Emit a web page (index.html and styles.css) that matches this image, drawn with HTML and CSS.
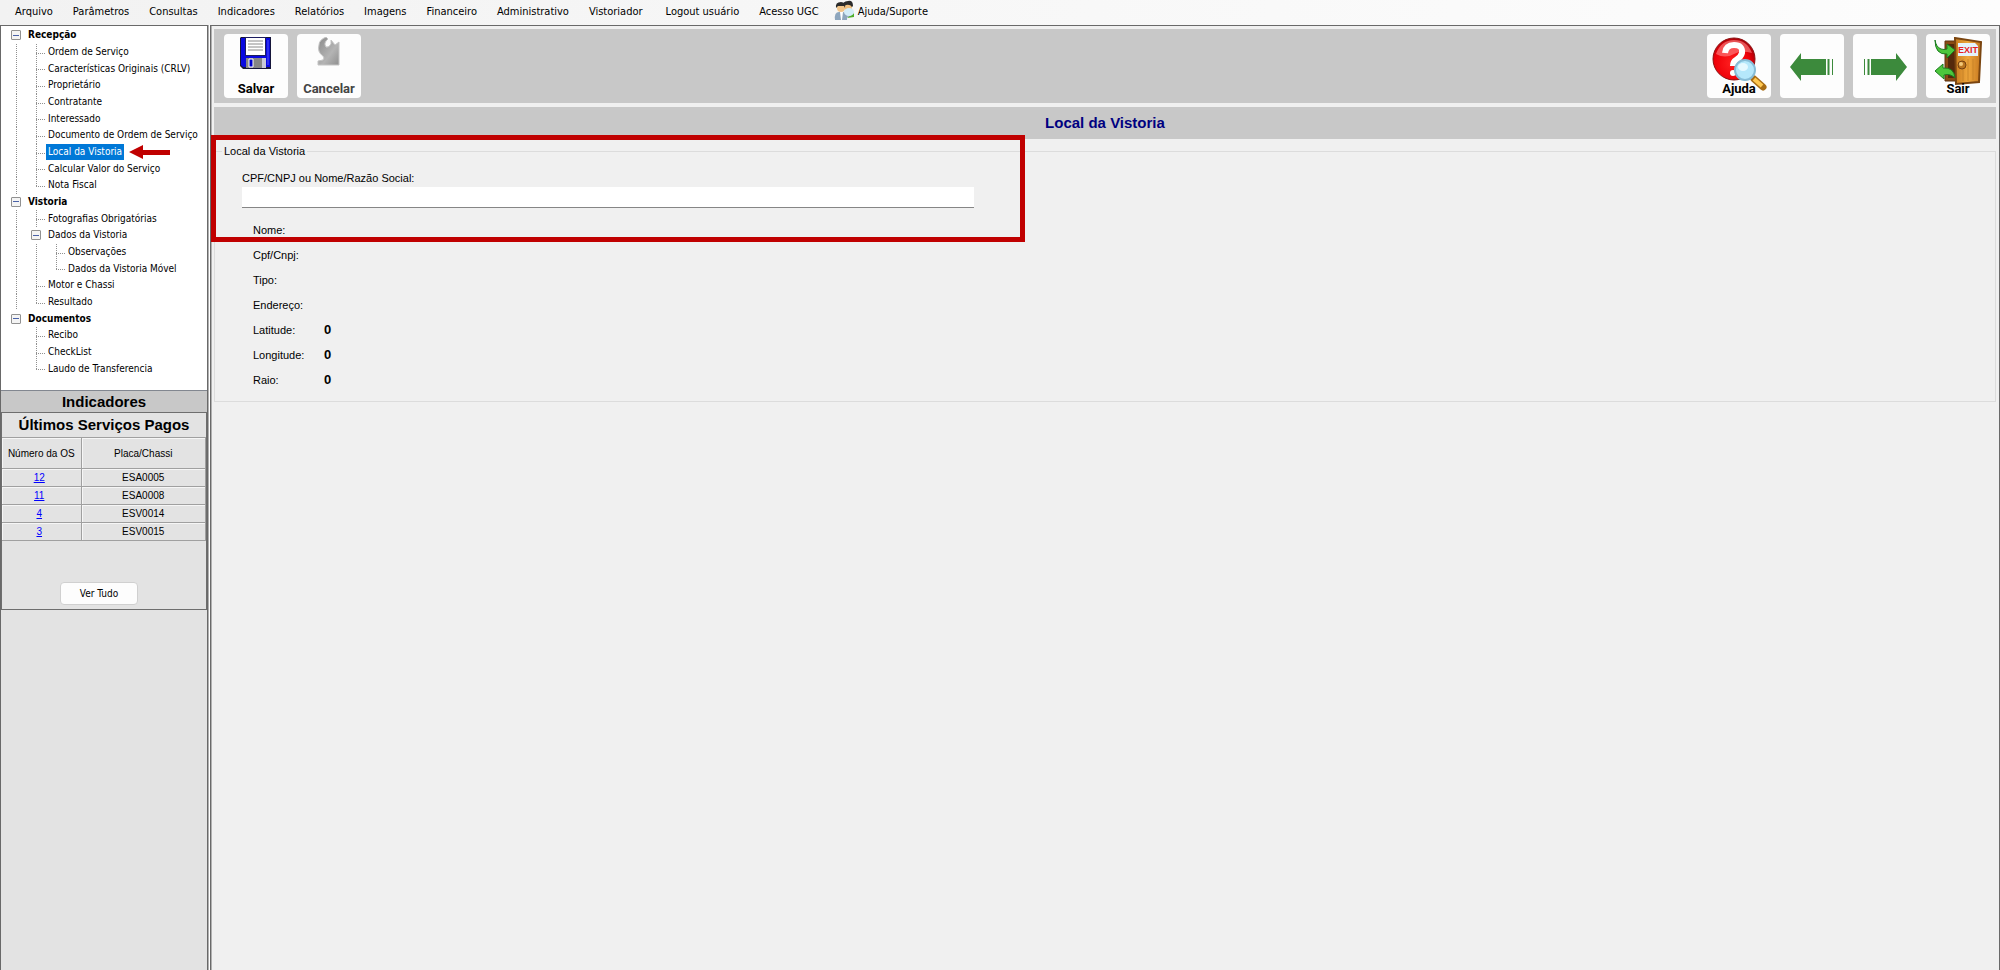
FILE: index.html
```
<!DOCTYPE html>
<html lang="pt-BR">

<head>
    <meta charset="UTF-8">
    <meta name="viewport" content="width=device-width, initial-scale=1.0">
    <title>Local da Vistoria</title>
    <link rel="stylesheet" href="styles.css">
</head>

<body>

    <nav class="menu">
        <a href="#">Arquivo</a>
        <a href="#">Parâmetros</a>
        <a href="#">Consultas</a>
        <a href="#">Indicadores</a>
        <a href="#">Relatórios</a>
        <a href="#">Imagens</a>
        <a href="#">Financeiro</a>
        <a href="#">Administrativo</a>
        <a href="#">Vistoriador</a>
        <a href="#" class="menu-logout">Logout usuário</a>
        <a href="#">Acesso UGC</a>
        <a href="#" class="menu-help">
            <svg width="22" height="22" viewBox="0 0 22 22" aria-hidden="true">
                <path d="M10 12 Q14 9 19 12 L20 17 H9z" fill="#9fb2c6" />
                <circle cx="14" cy="7" r="4" fill="#f0c080" />
                <path d="M9 7 Q8 1 14 1 Q19 0 19 6 L18 7 Q16 4 12 5z" fill="#2b2b2b" />
                <path d="M1 20 Q0 12 5 12 L9 12 Q14 12 13 20z" fill="#8ea6bd" />
                <path d="M6 12 h3 l-1 8 h-1z" fill="#fff" />
                <circle cx="7" cy="8" r="4" fill="#f2c58a" />
                <path d="M2 8 Q1 2 7 2 Q12 2 11 8 L10 6 Q6 6 4 6z" fill="#2b2b2b" />
                <path d="M13 18 L20 13 L20 17z" fill="#4fae2c" />
                <ellipse cx="15" cy="12" rx="5" ry="4" fill="#d3ecf8" />
            </svg>
            Ajuda/Suporte
        </a>
    </nav>

    <div class="window">
        <aside class="sidebar">
            <ul class="tree">
                <li><button class="toggle" aria-label="Recolher Recepção"></button><a href="#" class="root">Recepção</a></li>
                <li><i class="line"></i><i class="branch"></i><a href="#">Ordem de Serviço</a></li>
                <li><i class="line"></i><i class="branch"></i><a href="#">Características Originais (CRLV)</a></li>
                <li><i class="line"></i><i class="branch"></i><a href="#">Proprietário</a></li>
                <li><i class="line"></i><i class="branch"></i><a href="#">Contratante</a></li>
                <li><i class="line"></i><i class="branch"></i><a href="#">Interessado</a></li>
                <li><i class="line"></i><i class="branch"></i><a href="#">Documento de Ordem de Serviço</a></li>
                <li>
                    <i class="line"></i><i class="branch"></i><a href="#" class="selected">Local da Vistoria</a>
                    <svg class="pointer" width="42" height="14" viewBox="0 0 42 14" aria-hidden="true">
                        <path d="M0 7 L14 0 V5 H41 V10 H14 V14z" fill="#c00000" />
                    </svg>
                </li>
                <li><i class="line"></i><i class="branch"></i><a href="#">Calcular Valor do Serviço</a></li>
                <li><i class="line"></i><i class="branch last"></i><a href="#">Nota Fiscal</a></li>
                <li><button class="toggle" aria-label="Recolher Vistoria"></button><a href="#" class="root">Vistoria</a></li>
                <li><i class="line"></i><i class="branch"></i><a href="#">Fotografias Obrigatórias</a></li>
                <li><i class="line"></i><button class="toggle" aria-label="Recolher Dados da Vistoria"></button><a href="#">Dados da Vistoria</a></li>
                <li><i class="line"></i><i class="line"></i><i class="branch"></i><a href="#">Observações</a></li>
                <li><i class="line"></i><i class="line"></i><i class="branch last"></i><a href="#">Dados da Vistoria Móvel</a></li>
                <li><i class="line"></i><i class="branch"></i><a href="#">Motor e Chassi</a></li>
                <li><i class="line"></i><i class="branch last"></i><a href="#">Resultado</a></li>
                <li><button class="toggle" aria-label="Recolher Documentos"></button><a href="#" class="root">Documentos</a></li>
                <li><i class="space"></i><i class="branch"></i><a href="#">Recibo</a></li>
                <li><i class="space"></i><i class="branch"></i><a href="#">CheckList</a></li>
                <li><i class="space"></i><i class="branch last"></i><a href="#">Laudo de Transferencia</a></li>
            </ul>

            <h2 class="sidebar-title">Indicadores</h2>
            <section class="indicators">
                <h3>Últimos Serviços Pagos</h3>
                <table>
                    <thead>
                        <tr>
                            <th>Número da OS</th>
                            <th>Placa/Chassi</th>
                        </tr>
                    </thead>
                    <tbody>
                        <tr>
                            <td><a href="#">12</a></td>
                            <td>ESA0005</td>
                        </tr>
                        <tr>
                            <td><a href="#">11</a></td>
                            <td>ESA0008</td>
                        </tr>
                        <tr>
                            <td><a href="#">4</a></td>
                            <td>ESV0014</td>
                        </tr>
                        <tr>
                            <td><a href="#">3</a></td>
                            <td>ESV0015</td>
                        </tr>
                    </tbody>
                </table>
                <button class="see-all">Ver Tudo</button>
            </section>
        </aside>

        <main>
            <div class="toolbar">
                <button class="tool">
                    <svg width="32" height="32" viewBox="0 0 32 32" aria-hidden="true">
                        <path d="M1 0 H31 V32 H3 L0 29 V1z" fill="#15153a" />
                        <path d="M1 1 H30 V30 H3 L1 28z" fill="#0808e0" />
                        <path d="M5 0 H26 V19 H5z" fill="#1c1c60" />
                        <path d="M6 1 H25 V18 H6z" fill="#fff" />
                        <path d="M8 4 H23 M8 7 H23 M8 10 H23 M8 13 H23" stroke="#8a8a8a" />
                        <path d="M6 21 H25 V31 H6z" fill="#858585" />
                        <path d="M9 22 H13 V30 H9z" fill="#0000d0" stroke="#fff" />
                        <path d="M22 21 H26 V31 H22z" fill="#c8c8d8" />
                        <path d="M28 3 V28" stroke="#5050ff" />
                    </svg>
                    <span>Salvar</span>
                </button>
                <button class="tool" disabled>
                    <svg width="32" height="32" viewBox="0 0 32 32" aria-hidden="true">
                        <defs>
                            <linearGradient id="undo" x1="0" y1="0" x2="1" y2="1">
                                <stop offset="0" stop-color="#8a8a8a" />
                                <stop offset="0.6" stop-color="#b4b4b4" />
                                <stop offset="1" stop-color="#8f8f8f" />
                            </linearGradient>
                        </defs>
                        <path d="M13 0 L15 2 Q10 6 13 10 Q16 11 18 7 L18 3 L22 8 L26 5 V28 H5 V24 L10 23 Q12 21 10 19 Q4 15 6 8 Q6 3 13 0z" fill="url(#undo)" stroke="#c4c4c4" />
                    </svg>
                    <span>Cancelar</span>
                </button>
                <button class="tool tool-right tool-large">
                    <svg width="56" height="56" viewBox="0 0 56 56" aria-hidden="true">
                        <defs>
                            <radialGradient id="ball" cx="0.45" cy="0.6" r="0.6">
                                <stop offset="0" stop-color="#ff2020" />
                                <stop offset="0.7" stop-color="#ee0008" />
                                <stop offset="1" stop-color="#a80008" />
                            </radialGradient>
                        </defs>
                        <circle cx="23" cy="22" r="21" fill="url(#ball)" stroke="#8c1010" />
                        <path d="M5 17 Q10 3 23 3 Q36 3 41 16 Q30 13 23 17 Q14 22 5 17z" fill="#f88" opacity="0.6" />
                        <path d="M14 16 Q15 8 23 8 Q32 8 31 16 Q30 20 25 23 Q22 25 22 29" fill="none" stroke="#fff" stroke-width="6" />
                        <circle cx="22" cy="36" r="3" fill="#fff" />
                        <path d="M43 42 L52 50" stroke="#a86c14" stroke-width="7" stroke-linecap="round" />
                        <path d="M43 42 L51 49" stroke="#ffc850" stroke-width="4" />
                        <circle cx="34" cy="33" r="10" fill="#b5e8fb" stroke="#86bcd6" stroke-width="2" />
                        <ellipse cx="32" cy="30" rx="5" ry="4" fill="#e6f9ff" />
                    </svg>
                    <span>Ajuda</span>
                </button>
                <button class="tool tool-arrow" aria-label="Anterior">
                    <svg width="44" height="28" viewBox="0 0 44 28" aria-hidden="true">
                        <path d="M0 14 L11 0 V6 H36 V22 H11 V28z" fill="#3c8a3c" />
                        <path d="M38.500 6 V22" stroke="#3c8a3c" stroke-width="2" />
                        <path d="M42.500 6 V22" stroke="#3c8a3c" />
                    </svg>
                </button>
                <button class="tool tool-arrow" aria-label="Próximo">
                    <svg width="44" height="28" viewBox="0 0 44 28" aria-hidden="true">
                        <path d="M44 14 L33 0 V6 H8 V22 H33 V28z" fill="#3c8a3c" />
                        <path d="M5.500 6 V22" stroke="#3c8a3c" stroke-width="2" />
                        <path d="M1.500 6 V22" stroke="#3c8a3c" />
                    </svg>
                </button>
                <button class="tool tool-large">
                    <svg width="56" height="56" viewBox="0 0 56 56" aria-hidden="true">
                        <defs>
                            <linearGradient id="door" x1="0" y1="0" x2="1" y2="0">
                                <stop offset="0" stop-color="#c87c20" />
                                <stop offset="0.5" stop-color="#eea63c" />
                                <stop offset="1" stop-color="#c67820" />
                            </linearGradient>
                        </defs>
                        <path d="M15 4 H30 V44 H15z" fill="#8a4a14" stroke="#5e3410" />
                        <path d="M18 7 H26 V41 H18z" fill="#54290c" />
                        <path d="M25 1 L51 5 L49 45 L26 47z" fill="url(#door)" stroke="#7a4510" stroke-width="2" />
                        <path d="M33 22 V44 M38 22 V44 M43 22 V43" stroke="#c98428" />
                        <path d="M28 6 H45 L48 9 V19 H28z" fill="#e4f2fb" />
                        <text x="28" y="16" class="exit-text">EXIT</text>
                        <circle cx="32" cy="28" r="4" fill="#b87420" stroke="#744010" />
                        <circle cx="31" cy="27" r="2" fill="#f2c878" />
                        <path d="M5 3 Q6 10 11 12 Q14 13 17 12 V7 L25 13 L17 21 V17 Q5 18 5 3z" fill="#4cc63c" stroke="#1c7c20" />
                        <path d="M25 41 Q24 30 13 31 V27 L5 34 L14 42 V38 Q20 36 25 41z" fill="#4cc63c" stroke="#1c7c20" />
                    </svg>
                    <span>Sair</span>
                </button>
            </div>

            <h1>Local da Vistoria</h1>

            <fieldset>
                <legend>Local da Vistoria</legend>
                <div class="search">
                    <label for="person">CPF/CNPJ ou Nome/Razão Social:</label>
                    <input type="text" id="person">
                    <div class="highlight"></div>
                </div>
                <dl>
                    <dt>Nome:</dt>
                    <dd></dd>
                    <dt>Cpf/Cnpj:</dt>
                    <dd></dd>
                    <dt>Tipo:</dt>
                    <dd></dd>
                    <dt>Endereço:</dt>
                    <dd></dd>
                    <dt>Latitude:</dt>
                    <dd>0</dd>
                    <dt>Longitude:</dt>
                    <dd>0</dd>
                    <dt>Raio:</dt>
                    <dd>0</dd>
                </dl>
            </fieldset>
        </main>
    </div>

</body>

</html>
```
FILE: styles.css
```
* {
    box-sizing: border-box;
}

body {
    font-family: 'DejaVu Sans Condensed', 'Liberation Sans', sans-serif;
    font-size: 10px;
    margin: 0;
    min-height: 100vh;
    background-color: #f0f0f0;
    color: #000;
    display: flex;
    flex-direction: column;
}

button,
input {
    font-family: inherit;
    font-size: inherit;
    color: inherit;
}

h1,
h2,
h3 {
    font-family: 'Liberation Sans', Arial, sans-serif;
    font-size: 15px;
    line-height: 20px;
    margin: 0;
    text-align: center;
}

/* menu */
.menu {
    display: flex;
    align-items: center;
    height: 25px;
    padding: 0 5px 3px;
    background: linear-gradient(90deg, #f2f2f2, #fdfdfd);
    font-size: 11px;
}

.menu a {
    display: flex;
    align-items: center;
    padding: 0 10px;
    color: #000;
    text-decoration: none;
    white-space: nowrap;
}

.menu .menu-logout {
    margin-left: 3px;
}

.menu .menu-help {
    gap: 2px;
    padding-left: 5px;
}

.window {
    flex: 1;
    display: flex;
    background-color: #fff;
}

/* sidebar */
.sidebar {
    width: 208px;
    background-color: #e3e3e3;
    border: 1px solid #696969;
    border-bottom: 0;
    box-shadow: 1px 0 #b0b0b0;
}

.tree {
    display: grid;
    grid-auto-rows: 1fr;
    height: 365px;
    margin: 0;
    padding: 1px 0 13px 15px;
    list-style: none;
    background-color: #fff;
    border-bottom: 1px solid #828790;
}

.tree li {
    display: flex;
    align-items: center;
}

.tree a {
    padding: 0 2px;
    line-height: 16px;
    color: #000;
    text-decoration: none;
    white-space: nowrap;
}

.tree .root {
    font-weight: bold;
}

.tree .selected {
    background-color: #0078d7;
    color: #fff;
}

.line,
.branch {
    align-self: stretch;
    background: repeating-linear-gradient(#909090 0 1px, transparent 1px 2px) 0 0 / 1px 100% no-repeat;
}

.line,
.space {
    width: 20px;
}

.branch {
    width: 10px;
    background:
        repeating-linear-gradient(#909090 0 1px, transparent 1px 2px) 0 0 / 1px 100% no-repeat,
        repeating-linear-gradient(90deg, #909090 0 1px, transparent 1px 2px) 0 9px / 10px 1px no-repeat;
}

.branch.last {
    background-size: 1px 9px, 10px 1px;
}

.toggle {
    width: 10px;
    height: 10px;
    margin: 0 5px 0 -5px;
    padding: 0;
    background: linear-gradient(#4a62a8, #4a62a8) 50% 50% / 6px 1px no-repeat #f4f4f4;
    border: 1px solid #919191;
    border-radius: 1px;
}

.pointer {
    margin-left: 5px;
}

.sidebar-title {
    padding-top: 1px;
    background-color: #c8c8c8;
}

.indicators {
    height: 198px;
    border: 1px solid #6e6e6e;
    display: flex;
    flex-direction: column;
}

.indicators h3 {
    padding: 2px 0;
}

table {
    width: 100%;
    table-layout: fixed;
    border-collapse: collapse;
    border-top: 1px solid #a0a0a0;
    font-family: 'Liberation Sans', Arial, sans-serif;
}

th,
td {
    padding: 0;
    height: 18px;
    border: 1px solid #a0a0a0;
    border-left: 0;
    font-weight: normal;
    text-align: center;
    box-shadow: inset 1px 1px #f6f6f6;
}

th {
    height: 31px;
}

th:first-child {
    width: 79px;
}

td:first-child {
    padding-right: 4px;
}

td a {
    color: #0000ff;
}

.see-all {
    width: 78px;
    height: 23px;
    margin: 41px 0 0 58px;
    background-color: #fdfdfd;
    border: 1px solid #d0d0d0;
    border-radius: 4px;
}

/* content */
main {
    flex: 1;
    margin-left: 2px;
    padding: 3px 3px 0 3px;
    background-color: #f0f0f0;
    border: 1px solid #696969;
    border-bottom: 0;
    box-shadow: inset 1px 0 #b0b0b0;
}

.toolbar {
    display: flex;
    align-items: center;
    gap: 9px;
    height: 74px;
    padding: 0 6px 0 10px;
    background-color: #c8c8c8;
}

.tool {
    display: flex;
    flex-direction: column;
    align-items: center;
    justify-content: space-between;
    width: 64px;
    height: 64px;
    padding: 3px 0 2px;
    background-color: #fdfdfd;
    border: 0;
    border-radius: 4px;
    font-family: Roboto, sans-serif;
    font-size: 13px;
    font-weight: bold;
    line-height: 15px;
}

.tool:disabled {
    color: #444;
}

.tool-right {
    margin-left: auto;
}

.tool-large svg {
    flex-shrink: 0;
    margin-bottom: -12px;
}

.tool-arrow {
    justify-content: center;
}

.exit-text {
    font-family: 'Liberation Sans', sans-serif;
    font-size: 9px;
    font-weight: bold;
    fill: #e81c24;
}

h1 {
    margin-top: 4px;
    padding: 6px 0;
    background-color: #c8c8c8;
    color: #000080;
}

fieldset {
    margin: 5px 0 0;
    padding: 12px 27px 9px;
    border: 1px solid #dcdcdc;
    font-family: 'Liberation Sans', Arial, sans-serif;
    font-size: 11px;
}

legend {
    margin-left: -20px;
    padding: 0 2px;
    line-height: 14px;
}

.search {
    position: relative;
    width: 732px;
    max-width: 100%;
}

.search label {
    display: block;
    line-height: 17px;
}

.search input {
    display: block;
    width: 100%;
    height: 21px;
    padding: 0 4px;
    background-color: #fff;
    border: 0;
    border-bottom: 1px solid #868686;
}

/* red frame around the search box */
.highlight {
    position: absolute;
    inset: -35px -51px -34px -31px;
    border: 5px solid #c00000;
    pointer-events: none;
}

dl {
    display: grid;
    grid-template-columns: 71px 1fr;
    grid-auto-rows: 25px;
    align-items: center;
    margin: 9px 0 0 11px;
}

dd {
    margin: 0;
    font-size: 13px;
    font-weight: bold;
}
```
